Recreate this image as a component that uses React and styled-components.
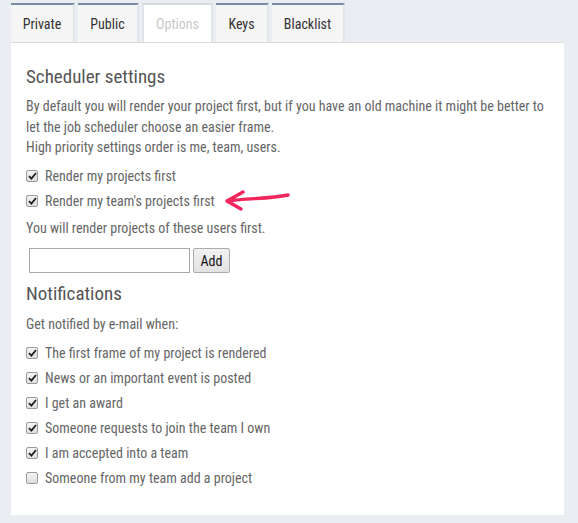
import React from "react"
import styled, { createGlobalStyle } from "styled-components"

const GlobalStyle = createGlobalStyle`
  html, body {
    margin: 0;
    padding: 0;
    background: #eaedf2;
  }
  body {
    font-family: "Roboto Condensed", "Liberation Sans Narrow", Roboto, sans-serif;
    font-size: 14px;
    color: #666;
  }
`

const Page = styled.div`
  padding: 3px 0 0 11px;
  width: 553px;
`

const TabBar = styled.div`
  display: flex;
  gap: 3px;
  height: 39px;
`

const Tab = styled.div`
  display: flex;
  align-items: center;
  justify-content: center;
  box-sizing: border-box;
  width: ${p => p.w}px;
  background: ${p => (p.active ? "#fff" : "#f5f5f5")};
  border-top: 2px solid ${p => (p.active ? "#d6d8dc" : "#7a8aa2")};
  border-left: ${p => (p.active ? "2px solid #e1e4e9" : "none")};
  border-right: 2px solid #e1e4e9;
  color: ${p => (p.active ? "#c8c8c8" : "#333")};
  font-size: 14px;
`

const Panel = styled.div`
  position: relative;
  background: #fff;
  border-top: 1px solid #dcdcdc;
  padding: 22px 15px 24px 15px;
`

const Heading = styled.h2`
  margin: 0 0 ${p => p.mb}px 0;
  font-weight: 400;
  font-size: 19px;
  line-height: 24px;
  color: #555;
`

const Text = styled.p`
  margin: 0;
  line-height: 20.5px;
`

const List = styled.div`
  display: flex;
  flex-direction: column;
  margin: ${p => p.mt}px 0 ${p => p.mb || 0}px 0;
`

const Row = styled.label`
  display: flex;
  align-items: center;
  gap: 7px;
  height: 25px;
`

const Box = styled.span`
  display: flex;
  align-items: center;
  justify-content: center;
  box-sizing: border-box;
  width: 12px;
  height: 12px;
  border: 1px solid #9a9a9a;
  border-radius: 2px;
  background: linear-gradient(#f4f4f4, #dedede);
`

const AddRow = styled.div`
  display: flex;
  gap: 3px;
  margin: 10px 0 9px 3px;
`

const Input = styled.input`
  box-sizing: border-box;
  width: 161px;
  height: 25px;
  border: 1px solid #a9a9a9;
  padding: 0 4px;
  font: inherit;
`

const Button = styled.button`
  box-sizing: border-box;
  width: 37px;
  height: 25px;
  padding: 0;
  border: 1px solid #acacac;
  border-radius: 2px;
  background: linear-gradient(#f2f2f2, #e2e2e2);
  color: #111;
  font: inherit;
  font-size: 14px;
`

const Arrow = styled.svg`
  position: absolute;
  left: 209px;
  top: 142px;
`

const Check = ({ checked }) => (
  <Box>
    {checked && (
      <svg width="9" height="8" viewBox="0 0 9 8">
        <path d="M1 4.2 L3.4 6.6 L8 1" fill="none" stroke="#222" strokeWidth="1.8" />
      </svg>
    )}
  </Box>
)

const tabs = [
  { label: "Private", w: 64 },
  { label: "Public", w: 61 },
  { label: "Options", w: 71, active: true },
  { label: "Keys", w: 53 },
  { label: "Blacklist", w: 73 },
]

const notifications = [
  ["The first frame of my project is rendered", true],
  ["News or an important event is posted", true],
  ["I get an award", true],
  ["Someone requests to join the team I own", true],
  ["I am accepted into a team", true],
  ["Someone from my team add a project", false],
]

export default function App() {
  return (
    <Page>
      <GlobalStyle />
      <TabBar>
        {tabs.map(t => (
          <Tab key={t.label} w={t.w} active={t.active}>
            {t.label}
          </Tab>
        ))}
      </TabBar>
      <Panel>
        <Heading mb={7}>Scheduler settings</Heading>
        <Text>
          By default you will render your project first, but if you have an old machine it might be better to
          let the job scheduler choose an easier frame.
          <br />
          High priority settings order is me, team, users.
        </Text>
        <List mt={6} mb={4}>
          <Row>
            <Check checked />
            Render my projects first
          </Row>
          <Row>
            <Check checked />
            Render my team's projects first
          </Row>
        </List>
        <Text>You will render projects of these users first.</Text>
        <AddRow>
          <Input type="text" />
          <Button>Add</Button>
        </AddRow>
        <Heading mb={8}>Notifications</Heading>
        <Text>Get notified by e-mail when:</Text>
        <List mt={6}>
          {notifications.map(([label, on]) => (
            <Row key={label}>
              <Check checked={on} />
              {label}
            </Row>
          ))}
        </List>
        <Arrow width="85" height="30" viewBox="0 0 85 30">
          <path
            d="M68 10 C50 14, 30 13, 7 16 M23 7 L7 16 L21 24"
            fill="none"
            stroke="#f2255c"
            strokeWidth="3.4"
            strokeLinecap="round"
            strokeLinejoin="round"
          />
        </Arrow>
      </Panel>
    </Page>
  )
}
